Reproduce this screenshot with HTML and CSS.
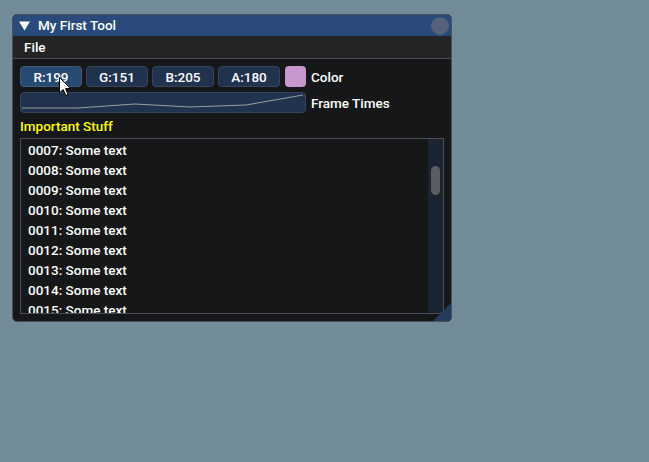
FILE: index.html
```html
<!DOCTYPE html>
<html>
<head>
<meta charset="utf-8">
<link rel="stylesheet" href="styles.css">
</head>
<body>
<div class="window">
  <div class="titlebar">
    <svg class="collapse" width="11" height="10" viewBox="0 0 11 10"><polygon points="0,0.5 11,0.5 5.5,9.5" fill="#ffffff"/></svg>
    <span class="title">My First Tool</span>
    <span class="close"></span>
  </div>
  <div class="menubar"><span class="menu-item">File</span></div>
  <div class="content">
    <div class="row">
      <div class="frame drag hovered">R:199</div>
      <div class="frame drag">G:151</div>
      <div class="frame drag">B:205</div>
      <div class="frame drag">A:180</div>
      <div class="swatch"></div>
      <span class="label">Color</span>
    </div>
    <div class="row">
      <div class="frame plot">
        <svg width="286" height="21" viewBox="0 0 286 21"><polyline points="2,16 58,16 115,12 170,15 226,13 283,3" fill="none" stroke="#9c9c9c" stroke-width="1"/></svg>
      </div>
      <span class="label">Frame Times</span>
    </div>
    <div class="important">Important Stuff</div>
    <div class="child">
      <div class="lines">
        <div class="line">0007: Some text</div>
        <div class="line">0008: Some text</div>
        <div class="line">0009: Some text</div>
        <div class="line">0010: Some text</div>
        <div class="line">0011: Some text</div>
        <div class="line">0012: Some text</div>
        <div class="line">0013: Some text</div>
        <div class="line">0014: Some text</div>
        <div class="line">0015: Some text</div>
      </div>
      <div class="scrollbar"><div class="grab"></div></div>
    </div>
  </div>
  <div class="grip"></div>
</div>
<svg class="cursor" width="13" height="20" viewBox="0 0 13 20"><path d="M0.5,0.5 L0.5,16 L4.2,12.5 L6.8,18.5 L9,17.5 L6.5,11.6 L11.5,11.6 Z" fill="#ffffff" stroke="#000000" stroke-width="1" stroke-linejoin="round"/></svg>
</body>
</html>
```
FILE: styles.css
```css
html, body {
  margin: 0;
  padding: 0;
}
body {
  background: #738c99;
  width: 649px;
  height: 462px;
  overflow: hidden;
  position: relative;
  font-family: Roboto, "Liberation Sans", sans-serif;
  font-weight: 500;
  font-size: 13.5px;
  color: #ffffff;
}
.window {
  margin: 14px 0 0 12px;
  width: 438px;
  height: 306px;
  border: 1px solid #4a5059;
  border-radius: 5px;
  background: #151718;
  overflow: hidden;
  position: relative;
  display: flex;
  flex-direction: column;
}
.titlebar {
  height: 21px;
  flex: none;
  background: #294a7a;
  display: flex;
  align-items: center;
  padding-left: 6px;
  padding-right: 2px;
}
.collapse {
  margin-right: 8px;
  margin-top: 0px;
}
.title {
  line-height: 21px;
}
.close {
  margin-left: auto;
  width: 18px;
  height: 18px;
  border-radius: 50%;
  background: #536278;
}
.menubar {
  height: 22px;
  flex: none;
  background: #242424;
  border-bottom: 1px solid #4a4d55;
  display: flex;
  align-items: center;
  padding-left: 11px;
}
.content {
  padding: 7px 7px 0 7px;
  display: flex;
  flex-direction: column;
}
.row {
  display: flex;
  align-items: center;
  gap: 4px;
  height: 21px;
  margin-bottom: 5px;
}
.frame {
  box-sizing: border-box;
  height: 21px;
  background: #20324d;
  border: 1px solid #36455c;
  border-radius: 4px;
}
.drag {
  width: 62px;
  display: flex;
  align-items: center;
  justify-content: center;
}
.hovered {
  background: #274a72;
  border-color: #3f5a7d;
}
.swatch {
  width: 21px;
  height: 21px;
  box-sizing: border-box;
  background: #c797cd;
  border-radius: 4px;
  margin-left: 1px;
}
.label {
  margin-left: 1px;
}
.plot {
  width: 286px;
  overflow: hidden;
  position: relative;
}
.plot svg {
  display: block;
  margin: -1px 0 0 -1px;
}
.important {
  color: #ffff00;
  height: 16px;
  line-height: 16px;
  margin-bottom: 4px;
}
.child {
  box-sizing: border-box;
  width: 424px;
  height: 176px;
  border: 1px solid #4a4d55;
  display: flex;
  overflow: hidden;
}
.lines {
  flex: 1;
  padding: 1px 0 0 7px;
}
.line {
  height: 20px;
  line-height: 20px;
}
.scrollbar {
  width: 15px;
  flex: none;
  background: #1c2431;
  position: relative;
}
.grab {
  position: absolute;
  left: 3px;
  top: 27px;
  width: 9px;
  height: 29px;
  border-radius: 5px;
  background: #5a5c5f;
}
.grip {
  position: absolute;
  right: 0;
  bottom: 0;
  width: 0;
  height: 0;
  border-style: solid;
  border-width: 0 0 18px 18px;
  border-color: transparent transparent #243b5c transparent;
}
.cursor {
  position: absolute;
  left: 59px;
  top: 77px;
}
```
